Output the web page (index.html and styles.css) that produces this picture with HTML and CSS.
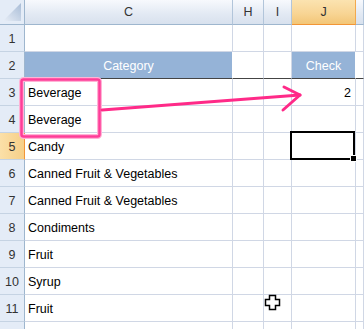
FILE: index.html
```html
<!DOCTYPE html>
<html lang="en">
<head>
    <meta charset="UTF-8">
    <title>Sheet</title>
    <link rel="stylesheet" href="styles.css">
</head>
<body>
    <div class="sheet">
        <!-- column headers -->
        <div class="corner">
            <svg width="24" height="24" viewBox="0 0 24 24">
                <defs>
                    <linearGradient id="tri" x1="0" y1="1" x2="1" y2="0">
                        <stop offset="0" stop-color="#e8eef7"/>
                        <stop offset="1" stop-color="#a8bcd6"/>
                    </linearGradient>
                </defs>
                <polygon points="3,21 21,21 21,3" fill="url(#tri)"/>
            </svg>
        </div>
        <div class="colhead">C</div>
        <div class="colhead">H</div>
        <div class="colhead">I</div>
        <div class="colhead active">J</div>
        <div class="colhead last"></div>

        <div class="rowhead">1</div>
        <div class="cell"></div><div class="cell"></div><div class="cell"></div><div class="cell"></div><div class="cell"></div>

        <div class="rowhead">2</div>
        <div class="cell title">Category</div><div class="cell thick"></div><div class="cell thick"></div><div class="cell title">Check</div><div class="cell thick"></div>

        <div class="rowhead">3</div>
        <div class="cell">Beverage</div><div class="cell"></div><div class="cell"></div><div class="cell num">2</div><div class="cell"></div>

        <div class="rowhead">4</div>
        <div class="cell">Beverage</div><div class="cell"></div><div class="cell"></div><div class="cell"></div><div class="cell"></div>

        <div class="rowhead active">5</div>
        <div class="cell">Candy</div><div class="cell"></div><div class="cell"></div><div class="cell"></div><div class="cell"></div>

        <div class="rowhead">6</div>
        <div class="cell">Canned Fruit &amp; Vegetables</div><div class="cell"></div><div class="cell"></div><div class="cell"></div><div class="cell"></div>

        <div class="rowhead">7</div>
        <div class="cell">Canned Fruit &amp; Vegetables</div><div class="cell"></div><div class="cell"></div><div class="cell"></div><div class="cell"></div>

        <div class="rowhead">8</div>
        <div class="cell">Condiments</div><div class="cell"></div><div class="cell"></div><div class="cell"></div><div class="cell"></div>

        <div class="rowhead">9</div>
        <div class="cell">Fruit</div><div class="cell"></div><div class="cell"></div><div class="cell"></div><div class="cell"></div>

        <div class="rowhead">10</div>
        <div class="cell">Syrup</div><div class="cell"></div><div class="cell"></div><div class="cell"></div><div class="cell"></div>

        <div class="rowhead">11</div>
        <div class="cell">Fruit</div><div class="cell"></div><div class="cell"></div><div class="cell"></div><div class="cell"></div>

        <div class="rowhead"></div>
        <div class="cell"></div><div class="cell"></div><div class="cell"></div><div class="cell"></div><div class="cell"></div>

        <!-- active cell J5 -->
        <div class="selection"><span class="handle"></span></div>

        <!-- pink callout over the sheet -->
        <svg class="overlay" width="364" height="329" viewBox="0 0 364 329">
            <rect x="21.5" y="79.5" width="78" height="57" rx="2" fill="none" stroke="#ffb3d6" stroke-width="5"/>
            <rect x="21.5" y="79.5" width="78" height="57" rx="2" fill="none" stroke="#ff3d98" stroke-width="2.5"/>
            <line x1="102" y1="110" x2="300" y2="95" stroke="#ff2a88" stroke-width="3" stroke-linecap="round"/>
            <polyline points="284,87 300,95 283,110" fill="none" stroke="#ff2a88" stroke-width="3" stroke-linecap="round" stroke-linejoin="round"/>
        </svg>

        <!-- mouse cursor -->
        <svg class="cursor" width="17" height="17" viewBox="0 0 17 17">
            <polygon points="5.5,1.5 11.5,1.5 11.5,5.5 15.5,5.5 15.5,11.5 11.5,11.5 11.5,15.5 5.5,15.5 5.5,11.5 1.5,11.5 1.5,5.5 5.5,5.5" fill="#fff" stroke="#000" stroke-width="1.5"/>
        </svg>
    </div>
</body>
</html>
```

FILE: styles.css
```css
body {
    margin: 0;
    font-family: "Liberation Sans", Arial, sans-serif;
    background: #fff;
    overflow: hidden;
}
.sheet {
    position: relative;
    display: grid;
    grid-template-columns: 25px 208px 31px 28px 64px 1fr;
    grid-template-rows: 25px repeat(12, 27px);
    width: 364px;
    height: 329px;
    overflow: hidden;
}
.corner {
    background: #e4ecf7;
    border-right: 1px solid #9eb6ce;
    border-bottom: 1px solid #9eb6ce;
    box-sizing: border-box;
}
.corner svg { display: block; }
.colhead {
    display: flex;
    align-items: center;
    justify-content: center;
    font-size: 12.5px;
    color: #333;
    background: linear-gradient(#f7f9fd, #e2e9f3 60%, #d8e1ee);
    border-right: 1px solid #b2c5da;
    border-bottom: 1px solid #9eb6ce;
    box-sizing: border-box;
}
.colhead.active {
    background: linear-gradient(#fbe3b0, #f8d595 55%, #f3c677);
    border-right-color: #f2a94e;
    border-bottom-color: #f29536;
}
.rowhead {
    display: flex;
    align-items: center;
    justify-content: center;
    font-size: 12.5px;
    color: #333;
    background: #e4ecf7;
    border-right: 1px solid #9eb6ce;
    border-bottom: 1px solid #c5d3e3;
    box-sizing: border-box;
    padding-top: 2px;
}
.rowhead.active {
    background: linear-gradient(90deg, #fbe0a8, #f6cf88);
    border-right-color: #f29536;
}
.cell {
    display: flex;
    align-items: center;
    font-size: 12.5px;
    color: #000;
    padding: 2px 3px 0;
    border-right: 1px solid #d0d7e5;
    border-bottom: 1px solid #d0d7e5;
    box-sizing: border-box;
    white-space: nowrap;
}
.cell.title {
    justify-content: center;
    color: #fff;
    background: #95b3d7;
    border-right-color: #fff;
    border-bottom: 1px solid #444;
}
.cell.thick {
    border-bottom: 1px solid #444;
}
.cell.num {
    justify-content: flex-end;
    padding-right: 4px;
}
.selection {
    position: absolute;
    left: 290px;
    top: 131px;
    width: 65px;
    height: 29px;
    border: 2px solid #000;
    box-sizing: border-box;
}
.handle {
    position: absolute;
    right: -4px;
    bottom: -4px;
    width: 5px;
    height: 5px;
    background: #000;
    border: 1px solid #fff;
}
.overlay {
    position: absolute;
    left: 0;
    top: 0;
    pointer-events: none;
}
.cursor {
    position: absolute;
    left: 264px;
    top: 294px;
}
```
